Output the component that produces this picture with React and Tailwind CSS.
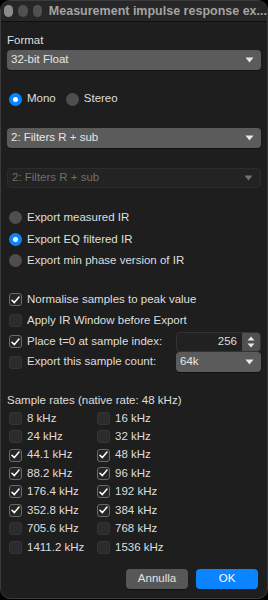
import { useState } from "react";

const font = { fontFamily: '"Liberation Sans", Arial, sans-serif' };

function Caret({ dim }) {
  return (
    <svg width="9" height="6" viewBox="0 0 9 6" className={dim ? "opacity-40" : ""}>
      <path d="M0.5 0.5 H8.5 L4.5 5.5 Z" fill="#e8e8e8" />
    </svg>
  );
}

function Select({ value, disabled, className = "" }) {
  return (
    <div
      className={`flex h-[20px] items-center justify-between rounded-[4px] pl-[4px] pr-[7px] ${
        disabled ? "border border-[#2c2c2c] bg-[#232323] text-[#6f6f6f]" : "bg-[#5b5b5b] text-[#e6e6e6] shadow-[0_1px_0_#111]"
      } ${className}`}
    >
      <span className="whitespace-nowrap">{value}</span>
      <Caret dim={disabled} />
    </div>
  );
}

function Radio({ on, label }) {
  return (
    <div className="flex items-center gap-[5px] whitespace-nowrap">
      {on ? (
        <span className="flex h-[13px] w-[13px] shrink-0 items-center justify-center rounded-full bg-[#0a84ff]">
          <span className="h-[5px] w-[5px] rounded-full bg-white" />
        </span>
      ) : (
        <span className="h-[13px] w-[13px] shrink-0 rounded-full bg-[#4e4e4e]" />
      )}
      <span>{label}</span>
    </div>
  );
}

function Check({ on, label }) {
  return (
    <div className="flex items-center gap-[5px] whitespace-nowrap">
      <span
        className={`flex h-[13px] w-[13px] shrink-0 items-center justify-center rounded-[3px] ${
          on ? "border border-[#6a6a6a] bg-[#262626]" : "border border-[#353535] bg-[#2c2c2c]"
        }`}
      >
        {on && (
          <svg width="9" height="8" viewBox="0 0 9 8">
            <path d="M1 4.2 L3.4 6.6 L8 1" fill="none" stroke="#ffffff" strokeWidth="1.5" strokeLinecap="round" strokeLinejoin="round" />
          </svg>
        )}
      </span>
      <span>{label}</span>
    </div>
  );
}

const rates = [
  ["8 kHz", false, "16 kHz", false],
  ["24 kHz", false, "32 kHz", false],
  ["44.1 kHz", true, "48 kHz", true],
  ["88.2 kHz", true, "96 kHz", true],
  ["176.4 kHz", true, "192 kHz", true],
  ["352.8 kHz", true, "384 kHz", true],
  ["705.6 kHz", false, "768 kHz", false],
  ["1411.2 kHz", false, "1536 kHz", false],
];

export default function App() {
  const [mono] = useState(true);

  return (
    <div className="h-[600px] w-[268px] bg-black" style={font}>
      <div className="flex h-[599px] flex-col overflow-hidden rounded-[10px] border border-[#3b3b3b] bg-[#1e1e1e] text-[11.5px] text-[#dedede]">
        {/* title bar */}
        <div className="flex h-[21px] shrink-0 items-center border-b border-[#0f0f0f] bg-[#272727] pl-[2px]">
          <span className="ml-[1px] h-[12px] w-[12px] rounded-full bg-[#8b8b8b]" />
          <span className="ml-[5px] h-[12px] w-[12px] rounded-full bg-[#505050]" />
          <span className="ml-[5px] h-[12px] w-[12px] rounded-full bg-[#505050]" />
          <span className="ml-[7px] whitespace-nowrap text-[12.5px] font-bold text-[#a3a3a3]">
            Measurement impulse response ex...
          </span>
        </div>

        <div className="flex flex-1 flex-col px-[6px]">
          <div className="mt-[10px] h-[16px] leading-[16px]">Format</div>
          <Select value="32-bit Float" className="mt-[2px]" />

          <div className="mt-[21px] flex h-[16px] items-center gap-[10px] pl-[2px]">
            <Radio on={mono} label="Mono" />
            <Radio on={!mono} label="Stereo" />
          </div>

          <Select value="2: Filters R + sub" className="mt-[21px]" />
          <Select value="2: Filters R + sub" disabled className="mt-[20px]" />

          <div className="mt-[21px] flex flex-col gap-[5.5px] pl-[2px]">
            <div className="h-[16px]"><Radio on={false} label="Export measured IR" /></div>
            <div className="h-[16px]"><Radio on label="Export EQ filtered IR" /></div>
            <div className="h-[16px]"><Radio on={false} label="Export min phase version of IR" /></div>
          </div>

          <div className="mt-[21px] flex flex-col pl-[2px]">
            <div className="flex h-[21px] items-center"><Check on label="Normalise samples to peak value" /></div>
            <div className="flex h-[21px] items-center"><Check on={false} label="Apply IR Window before Export" /></div>
            <div className="flex h-[21px] items-center justify-between">
              <Check on label="Place t=0 at sample index:" />
              <div className="flex h-[20px] w-[85px] overflow-hidden rounded-[4px] border border-[#333] bg-[#212121]">
                <span className="flex flex-1 items-center justify-end pr-[5px]">256</span>
                <span className="flex w-[18px] flex-col items-center justify-center gap-[2px] bg-[#505050]">
                  <svg width="8" height="5" viewBox="0 0 8 5"><path d="M0.5 4.5 H7.5 L4 0.5 Z" fill="#e8e8e8" /></svg>
                  <svg width="8" height="5" viewBox="0 0 8 5"><path d="M0.5 0.5 H7.5 L4 4.5 Z" fill="#e8e8e8" /></svg>
                </span>
              </div>
            </div>
            <div className="flex h-[20px] items-center justify-between">
              <Check on={false} label="Export this sample count:" />
              <Select value="64k" className="w-[85px]" />
            </div>
          </div>

          <div className="mt-[20px] h-[16px] leading-[16px]">Sample rates (native rate: 48 kHz)</div>
          <div className="mt-[1px] grid grid-cols-[88px_1fr] pl-[2px]">
            {rates.map(([a, ao, b, bo]) => (
              <div key={a} className="contents">
                <div className="flex h-[18.43px] items-center"><Check on={ao} label={a} /></div>
                <div className="flex h-[18.43px] items-center"><Check on={bo} label={b} /></div>
              </div>
            ))}
          </div>

          <div className="mt-auto mb-[9px] flex justify-end gap-[8px] pr-[3px]">
            <button className="h-[20px] w-[62px] rounded-[4px] bg-[#575757] text-[#e3e3e3] shadow-[0_1px_0_#111]">Annulla</button>
            <button className="h-[20px] w-[62px] rounded-[4px] bg-[#0a84ff] text-white">OK</button>
          </div>
        </div>
      </div>
    </div>
  );
}
